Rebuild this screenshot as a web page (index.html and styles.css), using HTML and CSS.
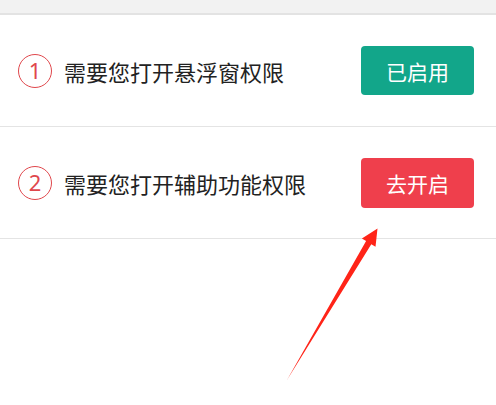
FILE: index.html
```html
<!DOCTYPE html>
<html lang="zh">
<head>
<meta charset="utf-8">
<link rel="stylesheet" href="styles.css">
</head>
<body>
<div class="topbar"></div>
<div class="list">
  <div class="row">
    <span class="num">1</span>
    <span class="label">需要您打开悬浮窗权限</span>
    <span class="btn btn-on">已启用</span>
  </div>
  <div class="row">
    <span class="num">2</span>
    <span class="label">需要您打开辅助功能权限</span>
    <span class="btn btn-go">去开启</span>
  </div>
</div>
<svg class="arrow" width="496" height="405" viewBox="0 0 496 405">
  <polygon points="287,380 366.1,241.1 361.9,238.6 377.5,228.5 375.5,246.8 371.3,244.3" fill="#ff2418"/>
</svg>
</body>
</html>
```
FILE: styles.css
```css
html, body {
  margin: 0;
  padding: 0;
  background: #ffffff;
}
body {
  width: 496px;
  height: 405px;
  overflow: hidden;
  position: relative;
  font-family: "Noto Sans CJK SC", "Noto Sans", sans-serif;
}
.topbar {
  height: 13px;
  background: #f2f2f2;
  border-bottom: 2px solid #e3e3e3;
}
.row {
  display: flex;
  align-items: center;
  height: 112px;
  padding: 0 22px 0 18px;
  border-bottom: 1px solid #e4e4e4;
  box-sizing: border-box;
}
.num {
  width: 34px;
  height: 34px;
  box-sizing: border-box;
  border: 1.5px solid #e0474c;
  border-radius: 50%;
  color: #e0474c;
  font-family: "Noto Sans", sans-serif;
  font-size: 22px;
  line-height: 31px;
  text-align: center;
  margin-right: 12px;
  flex: none;
}
.label {
  font-size: 22px;
  color: #222222;
}
.btn {
  margin-left: auto;
  width: 113px;
  height: 49px;
  border-radius: 4px;
  color: #ffffff;
  font-size: 21px;
  display: flex;
  align-items: center;
  justify-content: center;
  flex: none;
}
.btn-on {
  background: #12a68a;
}
.btn-go {
  background: #ef3f4c;
  height: 50px;
}
.arrow {
  position: absolute;
  left: 0;
  top: 0;
  pointer-events: none;
}
```
